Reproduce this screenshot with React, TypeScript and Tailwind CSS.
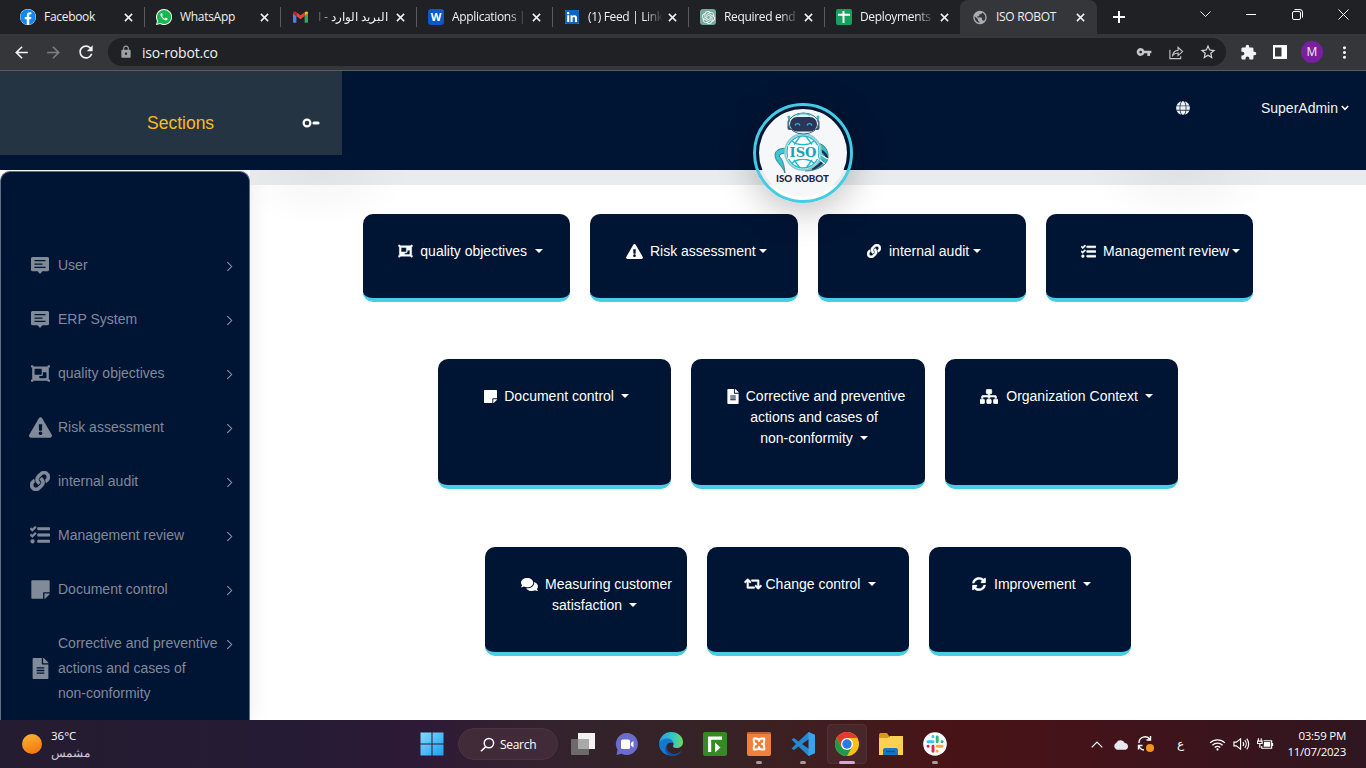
import React from "react";
import {
  FaObjectGroup, FaExclamationTriangle, FaLink, FaTasks, FaStickyNote, FaFileAlt, FaSitemap,
  FaComments, FaRetweet, FaSyncAlt, FaGlobe, FaFacebook, FaLinkedin,
} from "react-icons/fa";
import { MdVpnKey, MdStarBorder, MdExtension, MdMoreVert, MdArrowBack, MdArrowForward, MdRefresh, MdLock, MdPublic } from "react-icons/md";
import { SiOpenai } from "react-icons/si";

const CloseX = () => (
  <svg viewBox="0 0 10 10" className="h-[9px] w-[9px] shrink-0" stroke="#f1f3f4" strokeWidth="1.7" fill="none">
    <path d="M1 1l8 8M9 1L1 9" />
  </svg>
);

const WhatsApp = () => (
  <svg viewBox="0 0 16 16" className="h-4 w-4">
    <path d="M8 0a8 8 0 0 0-7 11.9L0 16l4.2-1A8 8 0 1 0 8 0z" fill="#fff" />
    <path d="M8 1a7 7 0 0 0-6 10.6L1.3 14.7l3.100-.8A7 7 0 1 0 8 1z" fill="#19b84f" />
    <path d="M5.400 4c-.9.500-1.200 1.600-.7 2.700.9 2 2.400 3.700 4.600 4.500 1.200.4 2.300-.2 2.400-1.400 0-.4-1.700-1.200-2-1l-.8.9C7.500 9.200 6.600 8.200 6 7.100l.7-.9C6.800 5.900 6.100 4 5.800 4z" fill="#fff" />
  </svg>
);

const Gmail = () => (
  <svg viewBox="0 0 16 12" className="h-[12px] w-[15px]">
    <path d="M0 2v9.200c0 .5.400.8.800.8H3.600V4.800z" fill="#4285f4" />
    <path d="M16 2v9.200c0 .5-.4.800-.8.800h-2.800V4.800z" fill="#34a853" />
    <path d="M12.400.800V5L16 2.300V1.500C16 .2 14.500-.4 13.500.300z" fill="#fbbc04" />
    <path d="M3.600 5V.9L8 4.200 12.400.9V5L8 8.300z" fill="#ea4335" />
    <path d="M0 1.500v.8L3.600 5V.9l-1-.6C1.500-.4 0 .2 0 1.500z" fill="#c5221f" />
  </svg>
);

const Sheet = () => (
  <span className="flex h-4 w-4 items-center justify-center rounded-[2px] bg-[#17a05d]">
    <svg viewBox="0 0 16 16" className="h-4 w-4" stroke="#fff" strokeWidth="2" fill="none">
      <path d="M2 5.800h12M7.500 2v12" />
    </svg>
  </span>
);

type Tab = { icon: React.ReactNode; title: string; rtl?: boolean; fade?: boolean; active?: boolean };
const tabs: Tab[] = [
  { icon: <FaFacebook className="h-4 w-4 rounded-full bg-white text-[#1486f0]" />, title: "Facebook" },
  { icon: <WhatsApp />, title: "WhatsApp" },
  { icon: <Gmail />, title: "البريد الوارد - ا", rtl: true },
  { icon: <span className="flex h-4 w-4 items-center justify-center rounded-[3px] bg-[#0b57d0] text-[11px] font-bold text-white">W</span>, title: "Applications |", fade: true },
  { icon: <FaLinkedin className="h-4 w-4 bg-white text-[#0a66c2] [clip-path:inset(1px)]" />, title: "(1) Feed | Link", fade: true },
  { icon: <span className="flex h-4 w-4 items-center justify-center rounded-[3px] bg-[#74aa9c]"><SiOpenai className="h-[13px] w-[13px] text-white" /></span>, title: "Required end", fade: true },
  { icon: <Sheet />, title: "Deployments", fade: true },
  { icon: <MdPublic className="h-[17px] w-[17px] text-[#a9adb2]" />, title: "ISO ROBOT", active: true },
];

function BrowserChrome() {
  return (
    <div className="h-[71px] shrink-0 bg-[#35363a] font-['Open_Sans','Noto_Sans',sans-serif] text-[12px] text-[#eef0f2]">
      <div className="flex h-[34px] bg-[#202124] pl-2">
        {tabs.map((t, i) => (
          <div
            key={i}
            className={
              t.active
                ? "flex h-[34px] w-[137px] shrink-0 items-center rounded-t-[8px] bg-[#35363a] pl-3 pr-3"
                : "relative flex h-[34px] w-[136px] shrink-0 items-center pl-3 pr-[11px]"
            }
          >
            <span className="flex w-4 shrink-0 justify-center">{t.icon}</span>
            <span
              dir={t.rtl ? "rtl" : "ltr"}
              className={
                t.rtl
                  ? "ml-[6px] mr-[8px] w-[74px] shrink-0 whitespace-nowrap text-[12px] tracking-[0.1px] [mask-image:linear-gradient(to_left,#000_75%,transparent)]"
                  : t.fade
                  ? "ml-2 mr-[5px] w-[75px] shrink-0 whitespace-nowrap tracking-[-0.34px] [mask-image:linear-gradient(to_right,#000_75%,transparent)]"
                  : "ml-2 mr-[9px] w-[71px] shrink-0 whitespace-nowrap tracking-[-0.3px]"
              }
            >
              {t.title}
            </span>
            <CloseX />
            {!t.active && i < 6 && <span className="absolute -right-px top-[7px] h-[20px] w-px bg-[#5a5c60]" />}
          </div>
        ))}
        <div className="flex w-[44px] items-center justify-center">
          <svg viewBox="0 0 12 12" className="h-[12px] w-[12px]" stroke="#fff" strokeWidth="2"><path d="M6 0v12M0 6h12" /></svg>
        </div>
        <div className="ml-auto flex items-center pb-[6px] pr-[17px]">
          <svg viewBox="0 0 11 6" className="h-[6px] w-[11px]" stroke="#e8eaed" fill="none"><path d="M.5.500l5 5 5-5" /></svg>
          <svg viewBox="0 0 10 10" className="ml-[35px] h-[10px] w-[10px]" stroke="#fff" fill="none"><path d="M0 5.500h10" /></svg>
          <svg viewBox="0 0 11 11" className="ml-[36px] h-[11px] w-[11px]" stroke="#fff" fill="none">
            <rect x=".5" y="2.500" width="8" height="8" rx="1.500" /><path d="M2.500.600h5.500a2.500 2.500 0 0 1 2.500 2.500v5.500" />
          </svg>
          <svg viewBox="0 0 11 11" className="ml-[35px] h-[11px] w-[11px]" stroke="#fff" fill="none"><path d="M.5.500l10 10M10.500.500l-10 10" /></svg>
        </div>
      </div>
      <div className="flex h-[36px] items-center pl-[12px] pr-[12px]">
        <MdArrowBack className="h-[19px] w-[19px] text-[#f1f3f4]" />
        <MdArrowForward className="ml-[13px] h-[19px] w-[19px] text-[#7d7f83]" />
        <MdRefresh className="ml-[13px] h-[20px] w-[20px] text-[#f1f3f4]" />
        <div className="ml-[12px] flex h-[28px] w-[1118px] items-center rounded-full bg-[#202124] pl-[11px] pr-[9px]">
          <MdLock className="h-[14px] w-[14px] text-[#9aa0a6]" />
          <span className="ml-[9px] text-[14px] tracking-[-0.200px]">iso-robot.co</span>
          <MdVpnKey className="ml-auto h-[16px] w-[16px] text-[#c4c7ca]" />
          <svg viewBox="0 0 16 16" className="ml-4 h-[15px] w-[16px]" stroke="#c4c7ca" strokeWidth="1.200" fill="none">
            <path d="M1.500 5v9.500h11.500V12M4.500 11c.5-3.500 2.500-5.200 5.700-5.300V2.500L15 7l-4.800 4.300V8.500c-2.500 0-4.200.6-5.700 2.500z" />
          </svg>
          <MdStarBorder className="ml-[15px] h-[18px] w-[18px] text-[#d5d7d9]" />
        </div>
        <MdExtension className="ml-[14px] h-[17px] w-[17px] text-[#f1f3f4]" />
        <svg viewBox="0 0 14 14" className="ml-[16px] h-[14px] w-[14px]"><path fillRule="evenodd" fill="#fff" d="M0 0h14v14H0zM2 2.500v9h6.500v-9z" /></svg>
        <span className="ml-[14px] flex h-[22px] w-[22px] items-center justify-center rounded-full bg-[#7b1fa2] text-[12px]">M</span>
        <MdMoreVert className="ml-[12px] h-[19px] w-[19px] text-[#f1f3f4]" />
      </div>
      <div className="h-px bg-[#595d61]" />
    </div>
  );
}

function Logo() {
  return (
    <div className="absolute left-[753px] top-[32px] z-10 h-[100px] w-[100px] rounded-full border-[3px] border-[#43cde4] p-[3px] shadow-[0_8px_36px_rgba(0,0,0,0.25)]">
      <svg viewBox="0 0 88 88" className="h-[88px] w-[88px]">
        <circle cx="44" cy="44" r="44" fill="#f6f7f8" />
        <path d="M30 40c-8-2-14 1-14 6 0 7 7 10 10 18-1-9-2-13-6-17 3-4 7-3 11-1z" fill="#38c5d4" stroke="#275f78" strokeWidth=".7" />
        <path d="M58 34c8 1 12 8 11 15-1 8-12 13-23 13 10-5 14-14 12-28z" fill="#38bccb" stroke="#275f78" strokeWidth=".7" />
        <path d="M61 41c3 2 6 3 7 8M64 52c-2 3-6 6-11 8" stroke="#20304e" strokeWidth="2.500" fill="none" />
        <path d="M60 45c3 1 6 4 9 5M60 50l6 5" stroke="#e9fafc" strokeWidth="1.200" fill="none" />
        <circle cx="44" cy="43" r="18" fill="#fff" stroke="#8fcbd3" strokeWidth="1.800" />
        <g stroke="#22b6cc" strokeWidth="1.300" fill="none">
          <circle cx="44" cy="43" r="16" />
          <path d="M33 32c6 5 16 5 22 0M33 54c6-5 16-5 22 0M41 27.500l-6 8M47 27.500l6 8M35 51l6 8M53 51l-6 8" />
        </g>
        <rect x="29" y="36.500" width="30" height="13.500" fill="#fff" />
        <text x="44" y="47.500" textAnchor="middle" fontFamily="DejaVu Serif, serif" fontWeight="700" fontSize="12.500" textLength="27" lengthAdjust="spacingAndGlyphs" fill="#16a3bb">ISO</text>
        <path d="M30 14V8M59 14V8" stroke="#3c6b80" strokeWidth="1.300" />
        <circle cx="30" cy="8" r="1.600" fill="#2ebccd" /><circle cx="59" cy="8" r="1.600" fill="#2ebccd" />
        <rect x="28.500" y="11" width="5" height="10" rx="2" fill="#34506a" /><rect x="55.500" y="11" width="5" height="10" rx="2" fill="#34506a" />
        <ellipse cx="44.500" cy="14.500" rx="15" ry="10.500" fill="#dff3f7" stroke="#426b80" strokeWidth="1" />
        <path d="M38 6c4-2 8-2 13 0" stroke="#36bccd" strokeWidth="1.500" fill="none" />
        <rect x="31" y="8" width="27" height="14.500" rx="7" fill="#2b3558" />
        <path d="M36 16.500c1-2.500 4-2.500 5 0M48 16.500c1-2.500 4-2.500 5 0" stroke="#2db2da" strokeWidth="1.400" fill="none" />
        <text x="43.500" y="73" textAnchor="middle" fontFamily="Lato, sans-serif" fontWeight="900" fontSize="9" textLength="53" lengthAdjust="spacingAndGlyphs" fill="#1d2646">ISO ROBOT</text>
      </svg>
    </div>
  );
}

function Header() {
  return (
    <header className="relative h-[99px] shrink-0 bg-[#001433] text-white">
      <div className="flex">
        <div className="flex h-[84px] w-[342px] items-center bg-[#253443] pl-[147px] pt-[20px]">
          <span className="w-[155px] text-[17.5px] text-[#fbbc1d]">Sections</span>
          <svg viewBox="0 0 18 10" className="h-[10px] w-[18px]" fill="none" stroke="#fff">
            <circle cx="5" cy="5" r="3.400" strokeWidth="2.200" /><path d="M12 5h4" strokeWidth="3.200" strokeLinecap="round" />
          </svg>
        </div>
        <div className="ml-auto flex h-[74px] items-center pr-[17px]">
          <FaGlobe className="h-[14px] w-[14px] text-[#eef2f6] [stroke-width:8]" />
          <span className="ml-[71px] text-[14px] text-[#f2f4f7]">SuperAdmin</span>
          <svg viewBox="0 0 8 6" className="ml-[3px] h-[6px] w-[8px]" stroke="#fff" strokeWidth="1.500" fill="none"><path d="M.8 1L4 4.300 7.200 1" /></svg>
        </div>
      </div>
      <Logo />
    </header>
  );
}

const Comment = ({ className }: { className?: string }) => (
  <svg viewBox="0 0 18 17" className={className}>
    <path fillRule="evenodd" fill="currentColor" d="M1.500 0h15A1.500 1.500 0 0 1 18 1.500v11.300a1.500 1.500 0 0 1-1.500 1.500H11.500L9 17l-2.500-2.700H1.500A1.500 1.500 0 0 1 0 12.800v-11.300A1.500 1.500 0 0 1 1.500 0zM3.500 3v1.300h11V3zm0 3.400v1.300h8V6.400zm0 3.400v1.300h11V9.800z" />
  </svg>
);

const nav = [
  { label: "User", icon: <Comment className="h-[17px] w-[18px]" /> },
  { label: "ERP System", icon: <Comment className="h-[17px] w-[18px]" /> },
  { label: "quality objectives", icon: <FaObjectGroup className="h-[19px] w-[21px]" /> },
  { label: "Risk assessment", icon: <FaExclamationTriangle className="h-[21px] w-[23px]" /> },
  { label: "internal audit", icon: <FaLink className="h-[20px] w-[20px] [stroke-width:14]" /> },
  { label: "Management review", icon: <FaTasks className="h-[20px] w-[20px] [stroke-width:14]" /> },
  { label: "Document control", icon: <FaStickyNote className="h-[21px] w-[21px]" /> },
  { label: "Corrective and preventive actions and cases of\nnon-conformity", icon: <FaFileAlt className="h-[21px] w-[21px]" /> },
];

function Sidebar() {
  return (
    <aside className="mt-px w-[250px] shrink-0 overflow-hidden rounded-t-[10px] border border-b-0 border-[#5d6f86] bg-[#001433] pt-[66px] text-[#808a99] shadow-[0_0_22px_rgba(0,0,0,0.09)]">
      {nav.map((n) => (
        <div key={n.label} className="flex py-[14.5px] pl-[27px] pr-[16px] text-[14px] leading-[25px]">
          <span className="flex w-[24px] shrink-0 items-center justify-center">{n.icon}</span>
          <span className="ml-[6px] w-[168px] whitespace-pre-line">{n.label}</span>
          <svg viewBox="0 0 8 12" className="mt-[8px] h-[11px] w-[7px] shrink-0" stroke="#929ba8" strokeWidth="1.200" fill="none"><path d="M1.500 1l5 5-5 5" /></svg>
        </div>
      ))}
    </aside>
  );
}

const Caret = ({ className }: { className: string }) => (
  <span className={"inline-block h-0 w-0 border-x-4 border-t-4 border-x-transparent border-t-white " + className} />
);

type CardT = { icon: React.ReactNode; lines: string[]; pad: string; gap: string; caret: string };
const rows: { box: string; row: string; cards: CardT[] }[] = [
  {
    row: "mt-[44px]",
    box: "h-[88px] w-[207.6px]",
    cards: [
      { icon: <FaObjectGroup className="-mt-[2px] h-[14px] w-[15px] [stroke-width:16]" />, lines: ["quality objectives"], pad: "pl-[35.5px]", gap: "ml-[7px]", caret: "ml-[8px]" },
      { icon: <FaExclamationTriangle className="-mt-px h-[15px] w-[17px]" />, lines: ["Risk assessment"], pad: "pl-[35.5px]", gap: "ml-[7px]", caret: "ml-[3px]" },
      { icon: <FaLink className="-mt-[2px] h-[14px] w-[14px] [stroke-width:20]" />, lines: ["internal audit"], pad: "pl-[49px]", gap: "ml-[8px]", caret: "ml-[4px]" },
      { icon: <FaTasks className="-mt-px h-[15px] w-[15px] [stroke-width:16]" />, lines: ["Management review"], pad: "pl-[35px]", gap: "ml-[7.5px]", caret: "ml-[3px]" },
    ],
  },
  {
    row: "mt-[57px]",
    box: "h-[130px] w-[233.5px]",
    cards: [
      { icon: <FaStickyNote className="-mt-px h-[15px] w-[13px]" />, lines: ["Document control"], pad: "pl-[46px]", gap: "ml-[7.5px]", caret: "ml-[7px]" },
      { icon: <FaFileAlt className="-mt-px h-[15px] w-[12px]" />, lines: ["Corrective and preventive", "actions and cases of", "non-conformity"], pad: "pl-[34px] pr-[18px]", gap: "mr-[7px]", caret: "ml-[7px]" },
      { icon: <FaSitemap className="-mt-px h-[15px] w-[18px] [stroke-width:24]" />, lines: ["Organization Context"], pad: "pl-[35px]", gap: "ml-[8.5px]", caret: "ml-[7px]" },
    ],
  },
  {
    row: "mt-[58px]",
    box: "h-[109px] w-[202px]",
    cards: [
      { icon: <FaComments className="-mt-px h-[15px] w-[17px]" />, lines: ["Measuring customer", "satisfaction"], pad: "pl-[33px] pr-[12px]", gap: "mr-[7px]", caret: "ml-[7px]" },
      { icon: <FaRetweet className="-mt-px h-[14px] w-[18px] [stroke-width:14]" />, lines: ["Change control"], pad: "pl-[37px]", gap: "ml-[3.5px]", caret: "ml-[7.5px]" },
      { icon: <FaSyncAlt className="-mt-px h-[14px] w-[14px] [stroke-width:10]" />, lines: ["Improvement"], pad: "pl-[43px]", gap: "ml-[8px]", caret: "ml-[7px]" },
    ],
  },
];

function Card({ c, box }: { c: CardT; box: string }) {
  const last = c.lines.length - 1;
  return (
    <div className={"rounded-[10px] border-b-4 border-[#48cde5] bg-[#001433] pt-[27px] text-[14px] leading-[21px] text-white " + box}>
      {last === 0 ? (
        <div className={"flex items-center whitespace-nowrap " + c.pad}>
          {c.icon}
          <span className={c.gap}>{c.lines[0]}</span>
          <Caret className={c.caret + " -mt-[2px]"} />
        </div>
      ) : (
        <div className={"flex flex-col items-center whitespace-nowrap " + c.pad}>
          {c.lines.map((l, i) => (
            <div key={l} className={i === 0 ? "flex items-center" : "flex items-center pr-[4px]"}>
              {i === 0 && <span className={c.gap}>{c.icon}</span>}
              {l}
              {i === last && <Caret className={c.caret + " -mt-[2px]"} />}
            </div>
          ))}
        </div>
      )}
    </div>
  );
}

function Main() {
  return (
    <main className="relative flex-1">
      <div className="absolute inset-x-0 top-0 h-[15px] bg-[#eaebed]" />
      <div className="absolute left-0 top-0 h-[60px] w-[160px] bg-[radial-gradient(ellipse_at_45%_0%,rgba(0,0,0,0.04),transparent_70%)]" />
      <div className="absolute right-[90px] top-0 h-[60px] w-[190px] bg-[radial-gradient(ellipse_at_50%_0%,rgba(0,0,0,0.045),transparent_70%)]" />
      <div className="relative flex flex-col">
        {rows.map((r, i) => (
          <div key={i} className={"flex justify-center gap-[20px] " + r.row}>
            {r.cards.map((c) => <Card key={c.lines[0]} c={c} box={r.box} />)}
          </div>
        ))}
      </div>
    </main>
  );
}

const Start = () => (
  <svg viewBox="0 0 24 24" className="h-6 w-6">
    <defs><linearGradient id="win" x1="0" y1="0" x2="1" y2="1" gradientUnits="objectBoundingBox"><stop stopColor="#7fdcff" /><stop offset="1" stopColor="#1f9df2" /></linearGradient></defs>
    <path fill="url(#win)" d="M.5.5h11v11H.5zM12.500.5h11v11h-11zM.5 12.500h11v11H.5zM12.500 12.500h11v11h-11z" />
  </svg>
);
const TaskView = () => (
  <svg viewBox="0 0 24 24" className="h-6 w-6">
    <rect x="7" y="1" width="17" height="16" fill="#f2f2f2" /><rect x="0" y="7" width="18" height="16" rx="1" fill="#6d6a6b" /><rect x="7" y="7" width="11" height="10" fill="#a9a9a9" />
  </svg>
);
const Chat = () => (
  <svg viewBox="0 0 24 24" className="h-6 w-6">
    <path d="M12 1a11 11 0 1 1-5.300 20.700L1.500 23l1-5.300A11 11 0 0 1 12 1z" fill="#6c6bd0" />
    <rect x="6" y="7.500" width="9" height="9.500" rx="1.500" fill="#fff" /><path d="M15.800 11l2.700-2v6.500l-2.700-2z" fill="#fff" />
  </svg>
);
const Edge = () => (
  <svg viewBox="0 0 24 24" className="h-6 w-6">
    <defs>
      <linearGradient id="e1" x1="0" x2="1"><stop stopColor="#259fe6" /><stop offset=".6" stopColor="#36c7c5" /><stop offset="1" stopColor="#6ddb58" /></linearGradient>
    </defs>
    <path d="M0 11C1 4.500 6 0 12 0c7 0 12 4.500 12 10 0 4-3 6-6.500 6-3 0-4-1.200-3.500-2 2-3-1-6-5-6-4 0-8 1.500-9 3z" fill="url(#e1)" />
    <path d="M0 12c0-3 4-5.500 8-5.500 3.500 0 6 2 6 4.500-5-1-7 2-6.500 5 .5 4 4 6.500 8 7C7 25.500 0 19 0 12z" fill="#1678d2" />
    <path d="M9.500 11c-3 3-2 9 3 10.500 4 1.300 8-.5 10.500-3.500-2 5-6.500 6.500-10.500 6C6 23 4 15 9.500 11z" fill="#114f9a" />
  </svg>
);
const GreenApp = () => (
  <svg viewBox="0 0 24 24" className="h-6 w-6"><rect width="24" height="24" rx="2" fill="#358a25" /><path d="M5 20V4.500h14v3.200H8.200V20z" fill="#fff" /><path d="M12 10.500l5.500 5-5.500 5z" fill="#fff" /></svg>
);
const Xampp = () => (
  <svg viewBox="0 0 24 24" className="h-6 w-6"><rect width="24" height="24" rx="2" fill="#f0803a" /><path d="M0 2a2 2 0 0 1 2-2h20a2 2 0 0 1 2 2z" fill="#b9653a" />
    <path d="M9 6.500H6.800v2.800c0 1.500 1 2.700 2.200 2.700-1.200 0-2.200 1.200-2.200 2.700v2.800H9c1.500 0 3-1 3-2.500 0 1.500 1.500 2.500 3 2.500h2.200v-2.800c0-1.500-1-2.700-2.200-2.700 1.200 0 2.200-1.200 2.200-2.700V6.500H15c-1.500 0-3 1-3 2.500 0-1.500-1.500-2.500-3-2.500z" fill="none" stroke="#fff" strokeWidth="2" strokeLinejoin="round" />
  </svg>
);
const VsCode = () => (
  <svg viewBox="0 0 24 24" className="h-6 w-6"><path d="M17.500 0L24 3v18l-6.500 3L7.500 14.500 3 18 .5 16.500 5 12 .5 7.500 3 6l4.500 3.500zM18 7l-7 5 7 5z" fillRule="evenodd" fill="#2489d0" /><path d="M17.500 0L24 3v18l-6.500 3z" fill="#38a4ef" /></svg>
);
const Chrome = () => (
  <svg viewBox="0 0 24 24" className="h-6 w-6">
    <circle cx="12" cy="12" r="12" fill="#fbc116" />
    <path d="M12 6h10.400A12 12 0 0 0 1.600 6l5.200 9z" fill="#e33b2e" />
    <path d="M1.600 6A12 12 0 0 0 12 24l5.200-9L12 17.500 6.800 15z" fill="#23984b" />
    <circle cx="12" cy="12" r="6" fill="#fff" /><circle cx="12" cy="12" r="4.700" fill="#2f78e5" />
  </svg>
);
const Explorer = () => (
  <svg viewBox="0 0 24 24" className="h-6 w-6"><path d="M0 3c0-1 .5-2 1.500-2H8l2 3v3H0z" fill="#d99a13" /><path d="M0 6h9l2-2h13v19H0z" fill="#fcd053" /><path d="M4 23v-5c0-1.200 1-2 2-2h11c1 0 2 .8 2 2v5z" fill="#1578c7" /><path d="M7 19.500h9" stroke="#0b5396" strokeWidth="1.500" /></svg>
);
const Slack = () => (
  <svg viewBox="0 0 24 24" className="h-6 w-6" strokeWidth="2.900" strokeLinecap="round">
    <circle cx="12" cy="12" r="11.800" fill="#fff" />
    <path d="M10 4.500v.2M5 9.800h5" stroke="#36c5f0" /><path d="M14.200 5v4.800M19 9.800h.2" stroke="#2eb67d" /><path d="M14.200 14.200h5M14.200 19v.2" stroke="#ecb22e" /><path d="M5 14.200h.2M10 14.200v5" stroke="#e01e5a" />
  </svg>
);

const apps = [
  { el: <TaskView /> }, { el: <Chat /> }, { el: <Edge /> }, { el: <GreenApp /> }, { el: <Xampp />, dot: true }, { el: <VsCode />, dot: true },
  { el: <Chrome />, active: true }, { el: <Explorer /> }, { el: <Slack />, dot: true },
];

function Taskbar() {
  return (
    <footer className="flex h-[48px] shrink-0 items-center bg-[linear-gradient(90deg,#241c31_0px,#261b34_300px,#2e1a36_430px,#33212f_520px,#352326_700px,#3f1e20_820px,#481316_950px,#43131a_1100px,#2f1620_1366px)] font-['Open_Sans','Noto_Sans',sans-serif] text-white">
      <div className="flex w-[410px] items-center pl-[22px]">
        <span className="h-[20px] w-[20px] rounded-full bg-[linear-gradient(160deg,#fbb731,#f0700d)]" />
        <div className="ml-[9px] text-[11.500px] leading-[17px]">
          <div>36°C</div>
          <div dir="rtl" className="text-[11.500px] text-[#cfc9d5]">مشمس</div>
        </div>
      </div>
      <div className="flex w-[44px] justify-center">
        <Start />
      </div>
      <div className="ml-[4px] flex h-[32px] w-[100px] items-center rounded-full border border-[#4a3240] bg-[#412b39] pl-[21px]">
        <svg viewBox="0 0 16 16" className="h-[15px] w-[15px]" stroke="#fff" strokeWidth="1.600" fill="none"><circle cx="9.500" cy="6.500" r="5" /><path d="M6 10.500L1 15.200" /></svg>
        <span className="ml-[5px] pt-px text-[12px] tracking-[-0.3px]">Search</span>
      </div>
      <div className="ml-[3px] flex">
        {apps.map((a, i) => (
          <div key={i} className="flex w-[44px] justify-center">
            <div className={a.active ? "relative flex h-[40px] w-[40px] items-center justify-center rounded-[4px] border border-[#52302f] bg-[#47272a]" : "relative flex h-[40px] w-[40px] items-center justify-center"}>
              {a.el}
              {a.dot && <span className="absolute bottom-0 left-[17px] h-[3px] w-[6px] rounded-full bg-[#a79a9c]" />}
              {a.active && <span className="absolute -bottom-px left-[11px] h-[3px] w-[16px] rounded-full bg-[#dba2e4]" />}
            </div>
          </div>
        ))}
      </div>
      <div className="ml-auto flex items-center pr-[20px]">
        <svg viewBox="0 0 12 7" className="h-[7px] w-[12px]" stroke="#fff" strokeWidth="1.200" fill="none"><path d="M.7 6.300L6 1l5.300 5.300" /></svg>
        <svg viewBox="0 0 17 11" className="ml-[10px] h-[11px] w-[16px]" fill="#e8e8ec"><path d="M4 11a4 4 0 0 1-.4-7.400A5 5 0 0 1 12.500 4 3.600 3.600 0 0 1 13.500 11z" /></svg>
        <svg viewBox="0 0 18 18" className="ml-[8px] h-[18px] w-[18px]" fill="none" stroke="#fff" strokeWidth="1.400">
          <path d="M2 8a6 6 0 0 1 11-3.500M13.500 1v4h-4M1.500 14.500v-4h4M2 11a6 6 0 0 0 5 4" /><circle cx="13" cy="13" r="4" fill="#f7941d" stroke="none" />
        </svg>
        <span className="ml-[18px] w-[14px] text-center text-[12px]">ع</span>
        <svg viewBox="0 0 18 14" className="ml-[22px] h-[13px] w-[17px]" fill="none" stroke="#fff" strokeWidth="1.300">
          <path d="M1 5.200a11.500 11.500 0 0 1 16 0M3.500 7.800a8 8 0 0 1 11 0M6 10.300a4.500 4.500 0 0 1 6 0" /><circle cx="9" cy="12.300" r="1.200" fill="#fff" stroke="none" />
        </svg>
        <svg viewBox="0 0 18 14" className="ml-[7px] h-[14px] w-[17px]" fill="none" stroke="#fff" strokeWidth="1.200">
          <path d="M1 5v4h2.500L8 12.500v-11L3.500 5zM10.500 5a3 3 0 0 1 0 4M12.500 3a6 6 0 0 1 0 8M14.500 1.200a9 9 0 0 1 0 11.600" />
        </svg>
        <svg viewBox="0 0 18 14" className="ml-[7px] h-[14px] w-[17px]" fill="none" stroke="#fff" strokeWidth="1.200">
          <path d="M7 3.500h8.500v8H5V9M16.500 6v3" /><path d="M7.500 5h6.500v5H7z" fill="#fff" stroke="none" /><path d="M1.500 1v3M4.500 1v3M.5 4h5v2.500h-5zM3 6.500V11" />
        </svg>
        <div className="ml-[13px] text-right text-[11.500px] leading-[16px] tracking-[-0.250px]">
          <div>03:59 PM</div>
          <div>11/07/2023</div>
        </div>
      </div>
    </footer>
  );
}

export default function App() {
  return (
    <div className="flex h-[768px] w-[1366px] flex-col overflow-hidden bg-white font-['Liberation_Sans',Arial,sans-serif]">
      <BrowserChrome />
      <Header />
      <div className="flex min-h-0 flex-1 overflow-hidden">
        <Sidebar />
        <Main />
      </div>
      <Taskbar />
    </div>
  );
}
